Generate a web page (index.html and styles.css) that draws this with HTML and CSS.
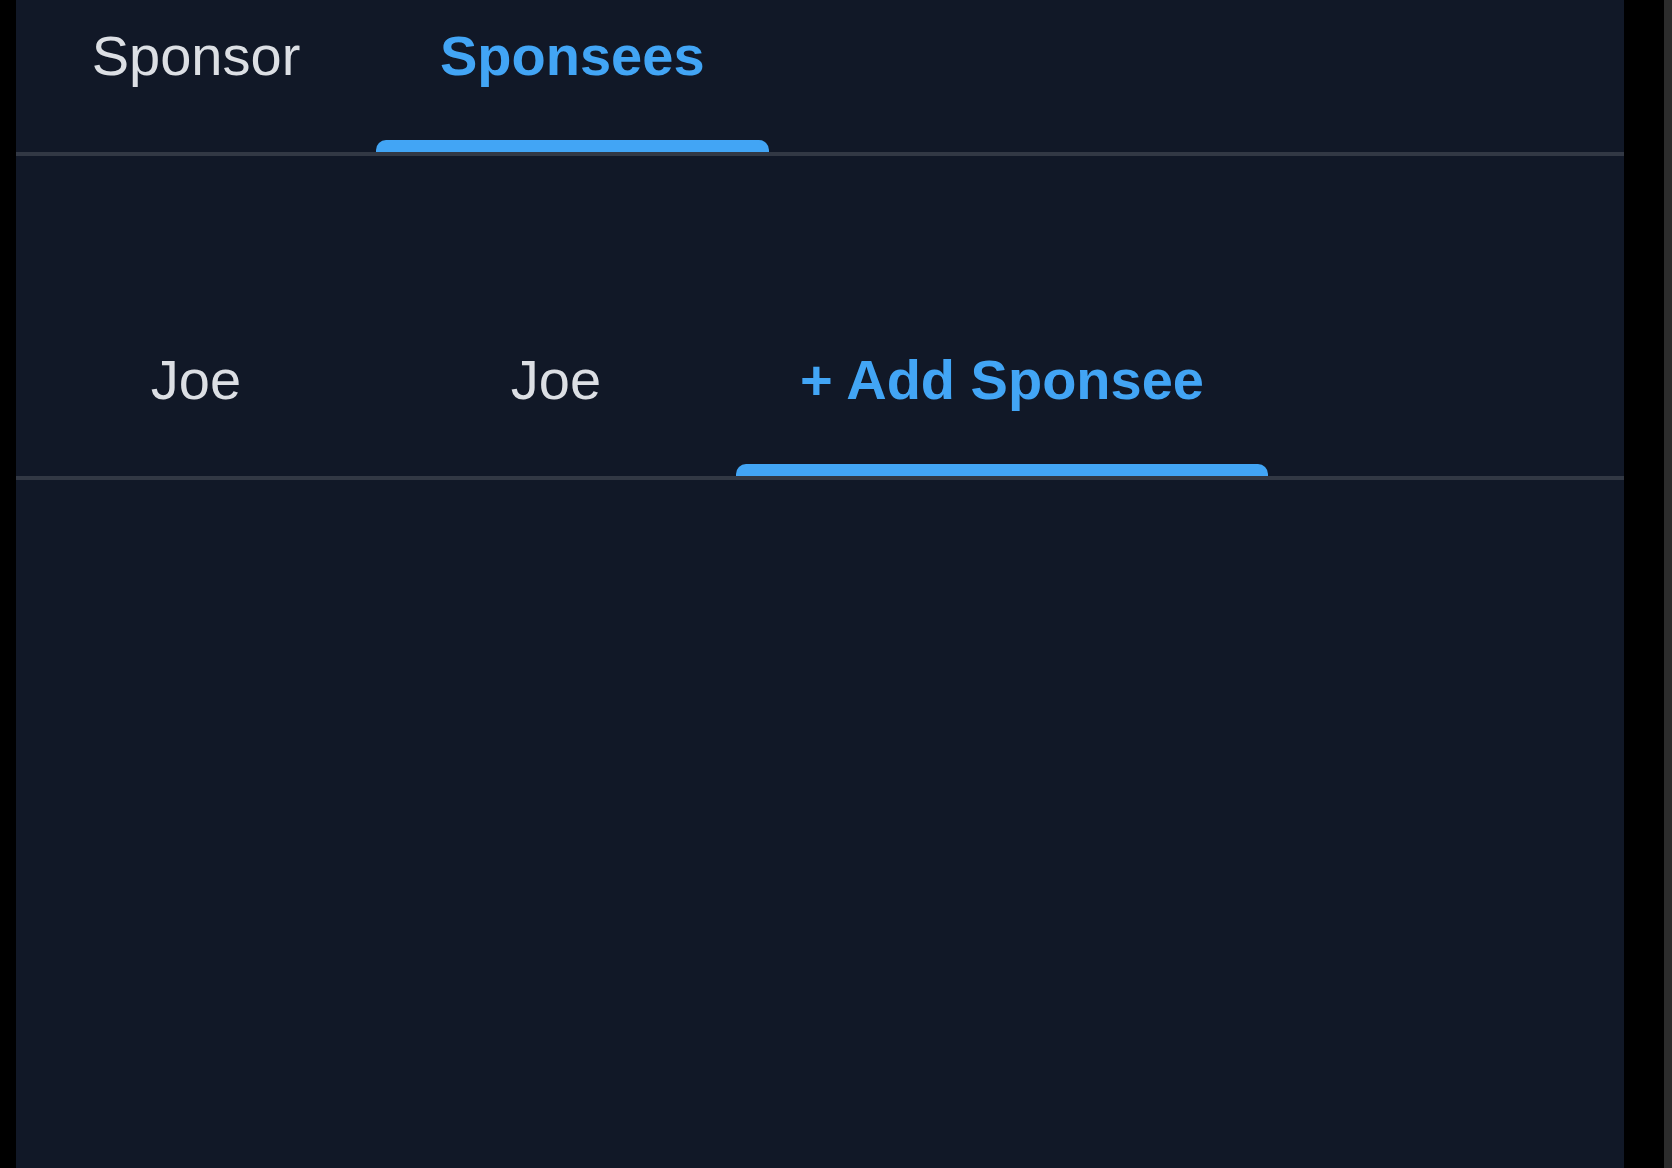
FILE: index.html
```html
<!DOCTYPE html>
<html lang="en">
<head>
<meta charset="utf-8">
<title>Sponsees</title>
<link rel="stylesheet" href="styles.css">
</head>
<body>
<div class="frame">
  <div class="edge-left"></div>
  <main class="panel">
    <nav class="tabbar">
      <div class="tab">Sponsor</div>
      <div class="tab active">Sponsees</div>
    </nav>
    <nav class="tabbar sub">
      <div class="tab">Joe</div>
      <div class="tab">Joe</div>
      <div class="tab active">+ Add Sponsee</div>
    </nav>
  </main>
  <div class="edge-right"></div>
  <div class="edge-scroll"></div>
</div>
</body>
</html>
```
FILE: styles.css
```css
html, body {
  margin: 0;
  padding: 0;
  background: #000;
}
.frame {
  display: flex;
  width: 1672px;
  height: 1168px;
  overflow: hidden;
}
.edge-left {
  width: 16px;
  flex: none;
  background: #000;
}
.panel {
  flex: 1;
  background: #111827;
  display: flex;
  flex-direction: column;
}
.edge-right {
  width: 40px;
  flex: none;
  background: #000;
}
.edge-scroll {
  width: 8px;
  flex: none;
  background: #2c2c2c;
}
.tabbar {
  display: flex;
  border-bottom: 4px solid #323844;
}
.tabbar.sub {
  margin-top: 168px;
}
.tab {
  position: relative;
  box-sizing: border-box;
  min-width: 360px;
  height: 152px;
  padding: 24px 64px 0;
  text-align: center;
  font-family: "Liberation Sans", Arial, sans-serif;
  font-size: 56px;
  line-height: 64px;
  color: #dcdfe4;
  white-space: nowrap;
}
.tab.active {
  color: #42a5f5;
  font-weight: bold;
}
.tab.active::after {
  content: "";
  position: absolute;
  left: 0;
  right: 0;
  bottom: 0;
  height: 12px;
  background: #42a5f5;
  border-radius: 10px 10px 0 0;
}
```
